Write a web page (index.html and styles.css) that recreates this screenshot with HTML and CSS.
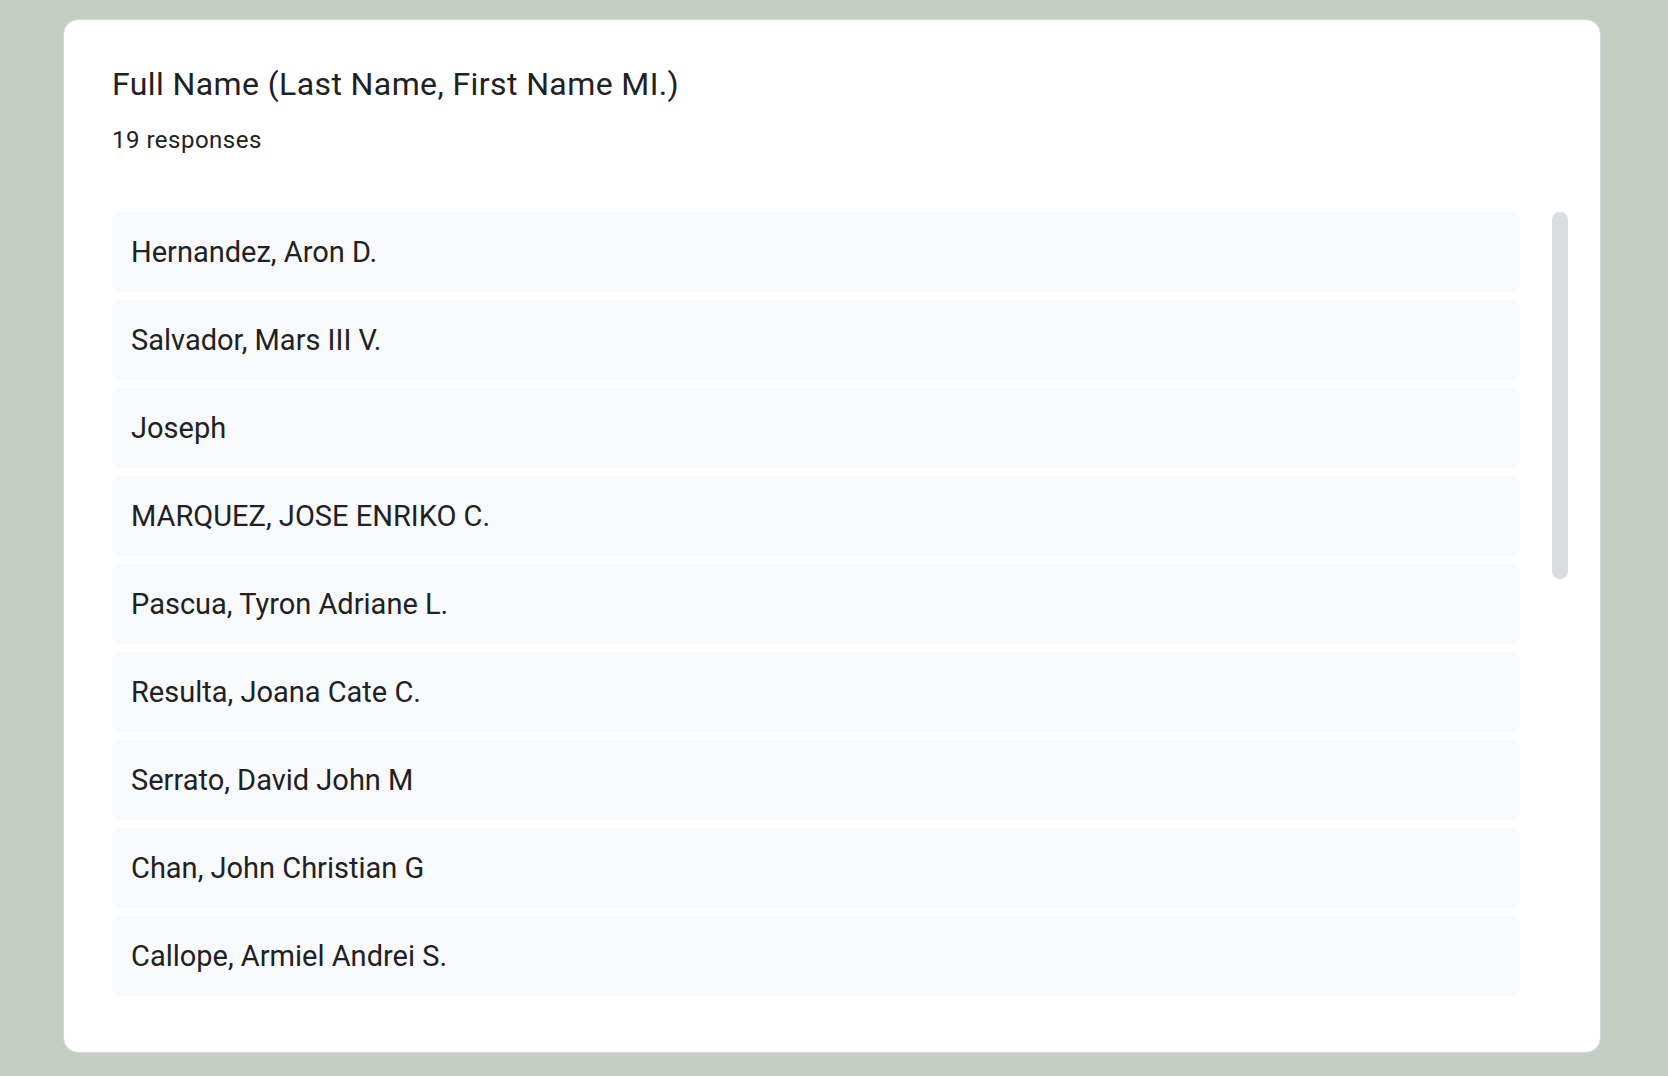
FILE: index.html
```html
<!DOCTYPE html>
<html lang="en">
<head>
<meta charset="utf-8">
<title>Full Name responses</title>
<link rel="stylesheet" href="styles.css">
</head>
<body>
<main class="card">
  <h1 class="title">Full Name (Last Name, First Name MI.)</h1>
  <div class="count">19 responses</div>
  <div class="list-wrap">
    <ul class="list">
      <li class="row">Hernandez, Aron D.</li>
      <li class="row">Salvador, Mars III V.</li>
      <li class="row">Joseph</li>
      <li class="row">MARQUEZ, JOSE ENRIKO C.</li>
      <li class="row">Pascua, Tyron Adriane L.</li>
      <li class="row">Resulta, Joana Cate C.</li>
      <li class="row">Serrato, David John M</li>
      <li class="row">Chan, John Christian G</li>
      <li class="row">Callope, Armiel Andrei S.</li>
    </ul>
    <div class="scrollbar"><div class="thumb"></div></div>
  </div>
</main>
</body>
</html>
```

FILE: styles.css
```css
html, body {
  margin: 0;
  padding: 0;
}
body {
  background: #c3cdc2;
  padding: 19px 67px 23px 63px;
  font-family: Roboto, "Liberation Sans", Arial, sans-serif;
  color: #202124;
}
.card {
  background: #ffffff;
  border: 1px solid #d3d6d9;
  border-radius: 15px;
  padding: 46px 32px 56px 48px;
  box-sizing: border-box;
  height: 1034px;
}
.title {
  margin: 0;
  font-size: 32px;
  line-height: 36px;
  font-weight: 400;
  letter-spacing: 0.4px;
}
.count {
  margin-top: 22px;
  font-size: 24px;
  line-height: 32px;
  letter-spacing: 0.5px;
}
.list-wrap {
  margin-top: 56px;
  display: flex;
  height: 784px;
  overflow: hidden;
}
.list {
  list-style: none;
  margin: 0;
  padding: 0;
  flex: 1;
  display: flex;
  flex-direction: column;
  gap: 8px;
}
.row {
  height: 80px;
  flex: 0 0 80px;
  background: #f8f9fa;
  border-radius: 8px;
  padding: 0 19px;
  display: flex;
  align-items: center;
  font-size: 29px;
}
.scrollbar {
  width: 16px;
  margin-left: 32px;
  flex: 0 0 16px;
}
.thumb {
  height: 367px;
  background: #dadce0;
  border-radius: 8px;
}
```
